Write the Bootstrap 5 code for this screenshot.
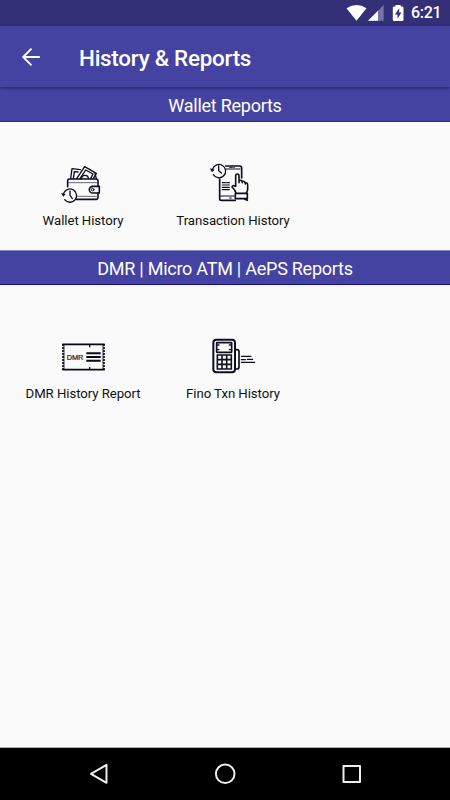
<!DOCTYPE html>
<html lang="en">
<head>
<meta charset="utf-8">
<meta name="viewport" content="width=device-width, initial-scale=1">
<title>History &amp; Reports</title>
<link href="https://cdn.jsdelivr.net/npm/bootstrap@5.3.0/dist/css/bootstrap.min.css" rel="stylesheet">
<style>
  body { font-family: Roboto, "Liberation Sans", sans-serif; background: #fafafa; color: #111; overflow: hidden; }
  svg { display: block; flex: none; }
  .status-strip { height: 26px; background: #343078; padding-right: 9px; }
  .clock-text { width: 30px; font-size: 16px; line-height: 28px; margin-left: 6px; font-weight: 500; letter-spacing: -.3px; white-space: nowrap; }
  .app-bar { height: 61px; background: #4543a2; padding: 0 20px; box-shadow: 0 1px 3px rgba(20,15,70,.65); z-index: 1; }
  .app-title { font-size: 22.4px; font-weight: 500; line-height: 28px; margin-left: 37px; padding-top: 2px; letter-spacing: -.25px; }
  .section-head { height: 35px; background: #4543a2; font-size: 18px; font-weight: 400; line-height: 38px; letter-spacing: -.25px; border-bottom: 1px solid #2b2792; }
  .section-head.ruled { border-top: 1px solid #8785c4; line-height: 36px; border-bottom-color: #100c8c; }
  .tiles { padding-left: 8px; }
  .tiles-first { height: 128px; padding-top: 33px; }
  .tiles-second { padding-top: 45px; }
  .tile { width: 150px; }
  .tile-label { font-size: 13.2px; line-height: 18px; white-space: nowrap; letter-spacing: -.06px; }
  .tiles-first .tile-label { padding-top: 1px; }
  .tiles-second .tile-label { margin-top: -1px; }
  .system-nav { height: 53px; background: #000; border-top: 1px solid #aaa; }
  .ink { fill: none; stroke: #0e0e20; stroke-width: 4.8; stroke-linecap: round; stroke-linejoin: round; }
</style>
</head>
<body class="d-flex flex-column vh-100">
<div class="status-strip d-flex align-items-center justify-content-end text-white">
  <svg width="60" height="26" viewBox="345 0 60 26">
    <path d="M346.500 8.200Q356.500 2 366.500 8.200L356.500 20.800Z" fill="#fff"/>
    <path d="M383.700 5V20.800H368Z" fill="#7773a6"/>
    <path d="M378 10.800V20.800H368Z" fill="#fff"/>
    <path d="M395.500 5V6.500H394A1.200 1.200 0 0 0 392.800 7.700V19.700A1.200 1.200 0 0 0 394 20.900H402.300A1.200 1.200 0 0 0 403.500 19.700V7.700A1.200 1.200 0 0 0 402.300 6.500H400.700V5Z" fill="#fff"/>
    <path d="M399.200 8.300L394.900 14.500H397.500V18.600L401.500 12.500H399.200Z" fill="#343078"/>
  </svg>
  <span class="clock-text">6:21</span>
</div>

<header class="app-bar d-flex align-items-center text-white position-relative">
  <svg width="22" height="22" viewBox="20 46 22 22" fill="none" stroke="#fff" stroke-width="1.9"><path d="M39.800 57H23.300M31.500 48.700L23.200 57L31.500 65.300"/></svg>
  <h1 class="app-title mb-0">History &amp; Reports</h1>
</header>

<main class="flex-grow-1">
  <h2 class="section-head text-white text-center mb-0">Wallet Reports</h2>
  <div class="tiles tiles-first d-flex">
    <div class="tile d-flex flex-column align-items-center">
      <svg width="64" height="56" viewBox="3 0 192 168">
        <g class="ink">
          <path d="M62 71L66 41L91 44M70 71L73 50L84 51" stroke-width="4"/>
          <path d="M80 71L104 35L139 55L130 71M90 71L107 45L129 57L122 71" stroke-width="4"/>
          <path d="M95 71A10 10 0 0 1 115 71M135 55L139 71" stroke-width="4"/>
          <path d="M53 95V77Q53 72 59 72H138Q144 72 144 78V93M144 114V127Q144 133 138 133H79"/>
          <path d="M56 83H141M83 124H139" stroke-width="3" stroke="#666675"/>
          <path d="M148 94H128A10 10 0 0 0 128 114H148Z"/>
          <circle cx="128" cy="104" r="4" stroke-width="3"/>
          <path d="M41 115A20 20 0 1 1 44 134M60 108V121L67 131" stroke-width="4"/>
        </g>
        <path d="M33 114L47 117L40 125Z" fill="#0e0e20"/>
      </svg>
      <span class="tile-label">Wallet History</span>
    </div>
    <div class="tile d-flex flex-column align-items-center">
      <svg width="64" height="56" viewBox="3 0 192 168">
        <g class="ink">
          <path d="M77 33H119Q125 33 125 39V69M59 72V131Q59 136 65 136H106" stroke-width="5"/>
          <path d="M78 42H120M62 123H103" stroke-width="3.500"/>
          <path d="M89 37H97M101 37H103M89 129H94" stroke-width="3"/>
          <path d="M67 83H76M80 83H88M67 90H88M67 97H88M67 104H88" stroke-width="3.500"/>
          <path d="M108 114Q106 105 96 96Q97 89 107 94V63Q107 57 112 57Q117 57 117 63V83M117 77Q126 73 127 83M127 80Q135 76 136 87M136 84Q143 82 143 91V101Q143 108 139 114"/>
          <path d="M106 115H142V131H106ZM132 131L142 136"/>
          <path d="M38 42A20 20 0 1 1 40 59M56 33V47L64 54" stroke-width="4"/>
        </g>
        <path d="M29 40L44 44L36 52Z" fill="#0e0e20"/>
      </svg>
      <span class="tile-label">Transaction History</span>
    </div>
  </div>

  <h2 class="section-head ruled text-white text-center mb-0">DMR | Micro ATM | AePS Reports</h2>
  <div class="tiles tiles-second d-flex">
    <div class="tile d-flex flex-column align-items-center">
      <svg width="64" height="56" viewBox="3 -1 192 168">
        <path d="M37 42H164M37 118H164" stroke="#080819" stroke-width="5"/>
        <path d="M39 41V119M162 41V119" stroke="#080819" stroke-width="5" stroke-dasharray="6 3"/>
        <path d="M42 43V118M159 43V118" stroke="#080819" stroke-width="2.500"/>
        <path d="M119 43V51M119 110V118" stroke="#080819" stroke-width="4"/>
        <path d="M109 69H152M109 80H152M109 91H152" stroke="#080819" stroke-width="6"/>
        <text x="50" y="89" font-family="Liberation Sans, sans-serif" font-size="22" textLength="50" fill="#111120" stroke="#111120" stroke-width=".6">DMR</text>
      </svg>
      <span class="tile-label">DMR History Report</span>
    </div>
    <div class="tile d-flex flex-column align-items-center">
      <svg width="64" height="56" viewBox="3 0 192 168">
        <g class="ink">
          <rect x="40" y="29" width="65" height="98" rx="9" stroke-width="6"/>
          <rect x="50" y="38" width="45" height="29" rx="1" stroke-width="5"/>
          <path d="M53 45H57M53 59H57M88 45H92M88 59H92" stroke-width="4"/>
          <path d="M107 59H111Q117 59 117 65V111Q117 117 111 117H107" stroke-width="5"/>
          <path d="M124 79H153M124 89H136M142 88H158M124 97H164" stroke-width="3.800"/>
        </g>
        <path d="M52 75H94V117H52ZM52 89H94M52 103H94M66 75V117M80 75V117" fill="none" stroke="#101020" stroke-width="4.800"/>
      </svg>
      <span class="tile-label">Fino Txn History</span>
    </div>
  </div>
</main>

<nav class="system-nav d-flex justify-content-center">
  <svg width="450" height="52" viewBox="0 748 450 52" fill="none" stroke="#eee" stroke-width="2" stroke-linejoin="round">
    <path d="M106.500 764.800V782.800L91 773.900Z"/>
    <circle cx="225.200" cy="773.800" r="9.300"/>
    <rect x="343.500" y="766" width="16.500" height="16"/>
  </svg>
</nav>
<script src="https://cdn.jsdelivr.net/npm/bootstrap@5.3.0/dist/js/bootstrap.bundle.min.js"></script>
</body>
</html>
